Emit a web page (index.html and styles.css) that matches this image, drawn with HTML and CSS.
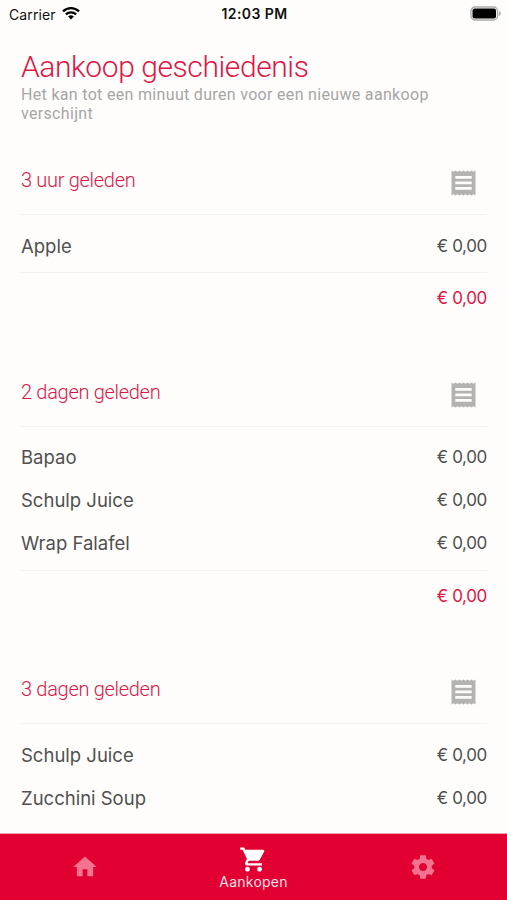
FILE: index.html
```html
<!DOCTYPE html>
<html lang="nl">
<head>
<meta charset="utf-8">
<title>Aankoop geschiedenis</title>
<link rel="stylesheet" href="styles.css">
</head>
<body>
<svg class="defs" width="0" height="0" aria-hidden="true">
  <symbol id="receipt" viewBox="0 0 25 26"><path fill-rule="evenodd" d="M.5 .5l2 1.300 2-1.300 2 1.300 2-1.300 2 1.300 2-1.300 2 1.300 2-1.300 2 1.300 2-1.300 2 1.300 2-1.300v25l-2-1.300-2 1.300-2-1.300-2 1.300-2-1.300-2 1.300-2-1.300-2 1.300-2-1.300-2 1.300-2-1.300-2 1.300zM4.300 6v2.700h16.400V6zM4.300 11.500v2.700h16.400v-2.700zM4.300 17v2.700h16.400V17z"/></symbol>
</svg>
<div class="screen">
  <div class="status">
    <div class="carrier"><span>Carrier</span>
      <svg class="wifi" viewBox="0 0 18 14"><g fill="none" stroke="#000" stroke-width="2.300"><path d="M1 5.300a11.500 11.500 0 0 1 16 0"/><path d="M3.900 8.400a7.300 7.300 0 0 1 10.200 0"/></g><path d="M9 13.500 6.100 10.600a4.200 4.200 0 0 1 5.800 0z"/></svg>
    </div>
    <div class="time">12:03 PM</div>
    <svg class="battery" viewBox="0 0 32 16"><rect x="1" y="1" width="26.500" height="13" rx="4" fill="#fff" stroke="#aaa" stroke-width="1.300"/><rect x="2.500" y="2.600" width="23.500" height="9.800" rx="2"/><path d="M28.800 5v5q2-.9 2-2.500t-2-2.500z" fill="#aaa"/></svg>
  </div>
  <main class="content">
    <h1>Aankoop geschiedenis</h1>
    <p class="note">Het kan tot een minuut duren voor een nieuwe aankoop verschijnt</p>

    <section class="purchase">
      <header><h2>3 uur geleden</h2><svg class="receipt"><use href="#receipt"/></svg></header>
      <ul>
        <li><span>Apple</span><span class="price">€ 0,00</span></li>
      </ul>
      <div class="total price">€ 0,00</div>
    </section>
    <section class="purchase">
      <header><h2>2 dagen geleden</h2><svg class="receipt"><use href="#receipt"/></svg></header>
      <ul>
        <li><span>Bapao</span><span class="price">€ 0,00</span></li>
        <li><span>Schulp Juice</span><span class="price">€ 0,00</span></li>
        <li><span>Wrap Falafel</span><span class="price">€ 0,00</span></li>
      </ul>
      <div class="total price">€ 0,00</div>
    </section>
    <section class="purchase open">
      <header><h2>3 dagen geleden</h2><svg class="receipt"><use href="#receipt"/></svg></header>
      <ul>
        <li><span>Schulp Juice</span><span class="price">€ 0,00</span></li>
        <li><span>Zucchini Soup</span><span class="price">€ 0,00</span></li>
      </ul>
    </section>
  </main>
  <nav class="tabs">
    <a class="tab"><svg class="icon" viewBox="0 0 24 24"><path d="M10 20v-6h4v6h5v-8h3L12 3 2 12h3v8z"/></svg></a>
    <a class="tab active"><svg class="icon" viewBox="0 0 24 24"><path d="M7 18c-1.100 0-1.990.9-1.990 2S5.900 22 7 22s2-.9 2-2-.9-2-2-2zM1 2v2h2l3.600 7.590-1.350 2.450c-.16.280-.25.610-.25.960 0 1.100.9 2 2 2h12v-2H7.420c-.14 0-.25-.11-.25-.25l.03-.12.900-1.630h7.450c.75 0 1.410-.41 1.750-1.030l3.580-6.490A1.003 1.003 0 0 0 20 4H5.210l-.94-2H1zm16 16c-1.100 0-1.990.9-1.990 2s.89 2 1.990 2 2-.9 2-2-.9-2-2-2z"/></svg><span>Aankopen</span></a>
    <a class="tab"><svg class="icon" viewBox="0 0 24 24"><path d="M19.430 12.980c.04-.32.070-.64.070-.98s-.03-.66-.07-.98l2.110-1.650c.19-.15.240-.42.120-.64l-2-3.460c-.12-.22-.39-.3-.61-.22l-2.490 1c-.52-.4-1.080-.73-1.690-.98l-.38-2.650A.488.488 0 0 0 14 2h-4c-.25 0-.46.180-.49.420l-.38 2.650c-.61.250-1.170.590-1.690.98l-2.490-1c-.23-.09-.49 0-.61.220l-2 3.460c-.13.220-.07.490.12.640l2.110 1.650c-.04.320-.07.650-.07.980s.03.660.07.980l-2.110 1.650c-.19.150-.24.420-.12.640l2 3.460c.12.220.39.300.61.220l2.490-1c.52.400 1.080.730 1.690.980l.38 2.650c.03.240.24.420.49.420h4c.25 0 .46-.18.490-.42l.38-2.650c.61-.25 1.170-.59 1.690-.98l2.490 1c.23.090.49 0 .61-.22l2-3.460c.12-.22.070-.49-.12-.64l-2.110-1.650zM12 15.500c-1.930 0-3.500-1.570-3.500-3.500s1.570-3.500 3.500-3.500 3.500 1.570 3.500 3.500-1.570 3.500-3.500 3.500z"/></svg></a>
  </nav>
</div>
</body>
</html>
```
FILE: styles.css
```css
* { box-sizing: border-box; margin: 0; padding: 0; }
body { background: #fefdfb; }
.defs { display: block; height: 0; }
.screen { width: 507px; height: 900px; display: flex; flex-direction: column; overflow: hidden; font-family: Inter, "Liberation Sans", sans-serif; color: #505050; }
.status { height: 28px; flex: none; display: grid; grid-template-columns: 1fr auto 1fr; align-items: center; padding: 0 7px 0 9px; color: #111; font-size: 14px; }
.carrier { display: flex; align-items: center; gap: 6px; letter-spacing: .12px; }
.wifi { width: 18px; height: 14px; margin-top: -2px; }
.time { font-weight: 600; letter-spacing: .4px; margin-top: -1px; }
.battery { width: 32px; height: 16px; justify-self: end; margin-right: -2px; }
.content { flex: 1; min-height: 0; overflow: hidden; padding: 21px 20px 0 21px; }
h1 { font: 300 30px/36px Roboto, sans-serif; letter-spacing: -.42px; color: #dc1747; }
.note { font: 400 16px/19px Roboto, sans-serif; letter-spacing: .32px; color: #a6a6a6; }
.purchase { margin-top: 40.500px; }
.note + .purchase { margin-top: 30px; }
.purchase header { display: flex; justify-content: space-between; height: 62px; padding: 15px 11px 0 0; border-bottom: 1px solid #f2f1f0; }
h2 { font: 300 20px/24px Roboto, sans-serif; letter-spacing: -.3px; color: #dc1747; }
.receipt { width: 25px; height: 26px; margin-top: 2px; fill: #b3b3b1; }
ul { list-style: none; padding: 9px 0 5px; border-bottom: 1px solid #f2f1f0; }
.open ul { padding-bottom: 30px; }
li { display: flex; justify-content: space-between; align-items: center; height: 43px; font-size: 18.500px; }
.price { font-size: 17px; letter-spacing: -.35px; }
.total { height: 51px; line-height: 51px; text-align: right; color: #dc1747; }
.tabs { flex: none; height: 67px; display: grid; grid-template-columns: repeat(3, 1fr); background: #e20033; border-top: 1px solid #f0a0b0; }
.tab { display: flex; flex-direction: column; align-items: center; justify-content: center; font-size: 14px; letter-spacing: .25px; color: #fbdfe5; }
.icon { width: 28px; height: 28px; fill: #f1738e; }
.active .icon { width: 29px; height: 29px; margin-bottom: -1px; fill: #fff; }
```
